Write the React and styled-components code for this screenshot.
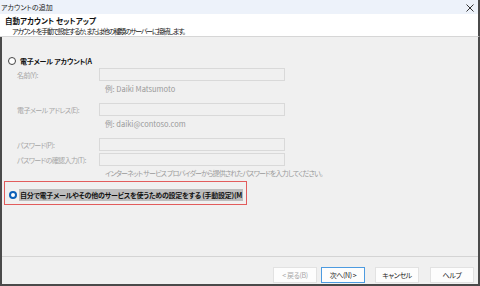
import styled, { createGlobalStyle } from 'styled-components';

const Global = createGlobalStyle`
  html, body { margin: 0; padding: 0; }
  body {
    width: 480px;
    height: 286px;
    overflow: hidden;
    background: #f0f0f0;
    font-family: "Noto Sans CJK JP", "Noto Sans", sans-serif;
    font-feature-settings: "palt";
  }
`;

const Window = styled.div`
  width: 480px;
  height: 286px;
  display: flex;
  flex-direction: column;
  background: #f0f0f0;
  box-sizing: border-box;
`;

const TitleBar = styled.div`
  height: 14px;
  flex: none;
  display: flex;
  align-items: center;
  justify-content: space-between;
  padding: 0 4px 0 1px;
  background: #edf2fa;
  border-right: 2px solid #4a4a4a;
  font-size: 7px;
  color: #222;
  box-sizing: border-box;
`;

const CloseBtn = styled.svg`
  width: 8px;
  height: 8px;
  margin-top: 1px;
`;

const Header = styled.div`
  height: 23px;
  flex: none;
  background: #fff;
  border-bottom: 1px solid #d6d6d6;
  border-right: 2px solid #4a4a4a;
  padding: 2px 0 0 5px;
  box-sizing: border-box;
`;

const HeadTitle = styled.div`
  font-size: 7.5px;
  font-weight: bold;
  line-height: 10px;
  color: #111;
`;

const HeadSub = styled.div`
  font-size: 7px;
  letter-spacing: -1.35px;
  line-height: 10px;
  color: #222;
  padding-left: 7px;
`;

const Frame = styled.div`
  flex: 1;
  display: flex;
  flex-direction: column;
  border-left: 2px solid #4a4a4a;
  border-right: 2px solid #4a4a4a;
  border-bottom: 2px solid #4a4a4a;
  box-sizing: border-box;
`;

const Body = styled.div`
  flex: 1;
  display: flex;
  flex-direction: column;
  padding: 18px 0 0 3px;
`;

const RadioRow = styled.div`
  display: flex;
  align-items: center;
  height: 12px;
  gap: ${p => p.$gap ?? 4}px;
  padding-left: ${p => p.$pad ?? 3}px;
  font-size: 7px;
  font-weight: bold;
  letter-spacing: ${p => p.$ls ?? -0.2}px;
  white-space: nowrap;
  color: #111;
`;

const Radio = styled.span`
  width: 8px;
  height: 8px;
  border-radius: 50%;
  box-sizing: border-box;
  flex: none;
  background: #fff;
  border: ${p => (p.$checked ? '2.2px solid #0a5fb8' : '1px solid #444')};
`;

const Field = styled.div`
  display: flex;
  align-items: center;
  margin-top: ${p => p.$gap}px;
  padding-left: 12px;
`;

const Label = styled.span`
  width: 82px;
  flex: none;
  white-space: nowrap;
  font-size: 7px;
  letter-spacing: -0.6px;
  color: #a6a6a6;
`;

const Input = styled.div`
  width: 186px;
  height: 13px;
  box-sizing: border-box;
  border: 1px solid #d9d9d9;
  background: #f0f0f0;
`;

const Note = styled.div`
  margin-top: ${p => p.$gap}px;
  padding-left: ${p => p.$indent}px;
  line-height: 12px;
  font-size: ${p => p.$size}px;
  letter-spacing: ${p => p.$ls}px;
  white-space: nowrap;
  color: #9a9a9a;
`;

const ManualBox = styled.div`
  margin: 2px 0 0 -1px;
  width: 243px;
  height: 24px;
  box-sizing: border-box;
  border: 1px solid #e25c5c;
  padding: 7px 0 0 4px;
`;

const Selected = styled.span`
  background: #bdbdbd;
  padding: 0 1px;
  font-weight: bold;
  line-height: 12px;
  color: #111;
`;

const Footer = styled.div`
  height: 28px;
  flex: none;
  border-top: 1px solid #d4d4d4;
  display: flex;
  justify-content: flex-end;
  align-items: flex-start;
  padding: 10px 4px 0 0;
  box-sizing: border-box;
`;

const Button = styled.div`
  width: 44px;
  height: 16px;
  margin-left: ${p => p.$gap}px;
  box-sizing: border-box;
  display: flex;
  align-items: center;
  justify-content: center;
  font-size: 7px;
  letter-spacing: -0.4px;
  background: #fdfdfd;
  border: 1px solid ${p => (p.$primary ? '#4d9be0' : '#e2e2e2')};
  color: ${p => (p.$disabled ? '#a8a8a8' : '#222')};
`;

export default function App() {
  return (
    <Window>
      <Global />
      <TitleBar>
        <span>アカウントの追加</span>
        <CloseBtn viewBox="0 0 8 8">
          <path d="M0.5 0.5 L7.5 7.5 M7.5 0.5 L0.5 7.5" stroke="#333" strokeWidth="1" />
        </CloseBtn>
      </TitleBar>
      <Header>
        <HeadTitle>自動アカウント セットアップ</HeadTitle>
        <HeadSub>アカウントを手動で設定するか、または他の種類のサーバーに接続します。</HeadSub>
      </Header>
      <Frame>
        <Body>
          <RadioRow>
            <Radio />
            <span>電子メール アカウント(A</span>
          </RadioRow>
          <Field $gap={1}>
            <Label>名前(Y):</Label>
            <Input />
          </Field>
          <Note $gap={2} $indent={100} $size={7.5} $ls={0}>例: Daiki Matsumoto</Note>
          <Field $gap={8}>
            <Label>電子メール アドレス(E):</Label>
            <Input />
          </Field>
          <Note $gap={2} $indent={100} $size={7.5} $ls={0}>例: daiki@contoso.com</Note>
          <Field $gap={8}>
            <Label>パスワード(P):</Label>
            <Input />
          </Field>
          <Field $gap={2}>
            <Label>パスワードの確認入力(T):</Label>
            <Input />
          </Field>
          <Note $gap={1} $indent={100} $size={7} $ls={-0.8}>インターネット サービス プロバイダーから提供されたパスワードを入力してください。</Note>
          <ManualBox>
            <RadioRow $ls={-0.25} $pad={0} $gap={2}>
              <Radio $checked />
              <Selected>自分で電子メールやその他のサービスを使うための設定をする (手動設定)(M</Selected>
            </RadioRow>
          </ManualBox>
        </Body>
        <Footer>
          <Button $disabled $gap={0}>&lt; 戻る(B)</Button>
          <Button $primary $gap={4}>次へ(N) &gt;</Button>
          <Button $gap={10}>キャンセル</Button>
          <Button $gap={11}>ヘルプ</Button>
        </Footer>
      </Frame>
    </Window>
  );
}
